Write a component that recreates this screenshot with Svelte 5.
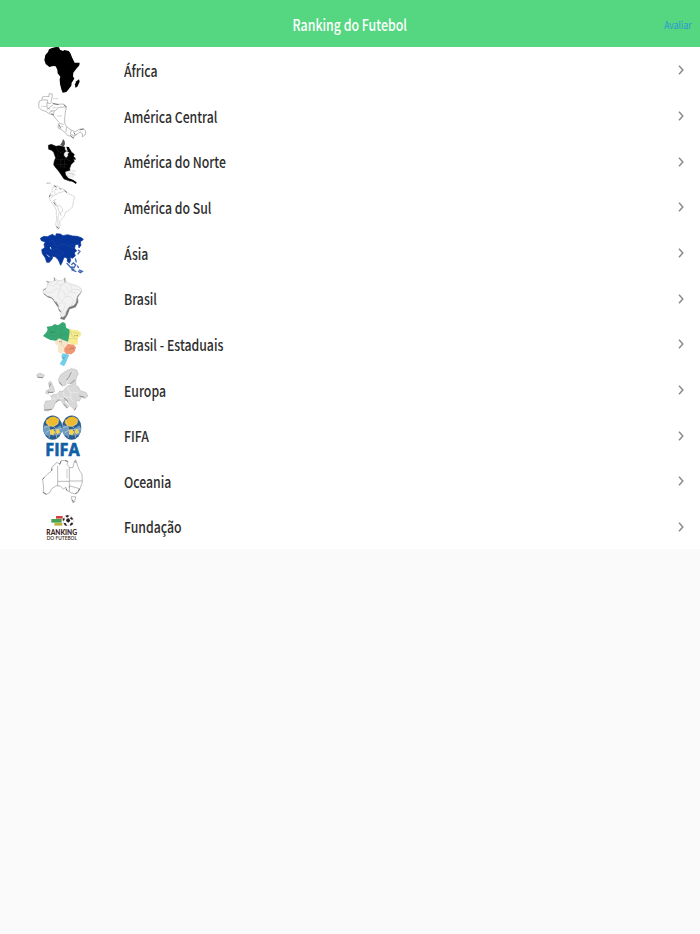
<script>
  // `top` is where each drawing's row starts on its own 192-wide canvas
  const regions = [
    { id: "africa", name: "África", top: 22 },
    { id: "central", name: "América Central", top: 3 },
    { id: "north", name: "América do Norte", top: 8 },
    { id: "south", name: "América do Sul", top: 13 },
    { id: "asia", name: "Ásia", top: 6 },
    { id: "brazil", name: "Brasil", top: 5 },
    { id: "states", name: "Brasil - Estaduais", top: 9 },
    { id: "europe", name: "Europa", top: 8 },
    { id: "fifa", name: "FIFA", top: 7 },
    { id: "oceania", name: "Oceania", top: 6 },
    { id: "foundation", name: "Fundação", top: 143 },
  ];
</script>

<header>
  <h1><span>Ranking do Futebol</span></h1>
  <button class="rate"><span>Avaliar</span></button>
</header>

<ul>
  {#each regions as region (region.id)}
    <li>
      <svg class="thumb" viewBox="0 {region.top} 192 137" aria-hidden="true">
        {#if region.id === "africa"}
          <path d="M57 29L66 25L78 22L87 23L90 30L99 34L103 31L116 34L121 40L126 53L134 69L149 69L148 77L138 89L130 99L129 110L133 117L125 129L124 138L116 149L109 157L98 159L94 149L90 133L89 119L91 111L83 101L82 90L77 80L69 79L58 82L47 73L43 61L46 46L54 37Z" />
          <path d="M147 119L149 126L142 141L136 144L135 134L139 125Z" />
        {:else if region.id === "central"}
          <g class="outline">
            <path d="M37 15L46 13L57 14L57 5L67 6L66 16L63 29L68 34L83 37L101 36L109 44L106 61L104 79L104 94L110 104L123 114L136 119L148 112L160 110L167 117L166 128L157 135L158 126L150 120L142 126L134 130L130 139L122 133L112 130L107 123L94 113L84 108L85 98L88 92L76 79L69 69L57 65L49 59L34 54L26 45L27 28L36 24Z" />
            <path d="M37 24H53V34H63M50 54L60 45L69 39M58 62L67 57L76 56L87 46L108 45M68 67L74 58M89 95L101 97M109 105L108 120" />
            <path d="M51 31V48L60 51M124 115L121 126L132 132" />
          </g>
          <path class="ink" d="M64 65L72 69M69 35L86 38M101 38L109 45M149 114L161 111M131 121L137 130M87 98L92 109M121 130L131 139" />
          <path class="labels" d="M69 20H84M34 43H51M68 47H82M82 72H96M59 57H70M92 104H101M132 128H142" />
        {:else if region.id === "north"}
          <path stroke="#000" stroke-width="1.5" d="M55 27L64 24L78 30L88 28L96 30L104 32L105 42L112 45L120 39L124 47L133 54L129 66L133 75L123 85L119 96L120 103L105 106L107 116L115 126L125 130L121 135L102 128L92 113L85 103L76 93L71 85L73 73L77 65L71 48L65 42L56 39Z" />
          <path class="relief" d="M79 34L85 46L93 49L101 44M77 68L91 70L108 68L123 75M79 83L94 85L112 84M93 70L92 91L109 93M84 51L83 65M104 72L103 91M111 52L108 67" />
          <path class="water" d="M103 50L109 45L117 48L113 53L114 58L108 64L102 57ZM108 107L118 103L128 109L137 116L128 122L113 120Z" />
          <path fill="#555" d="M99 8L104 14L105 24L100 31L91 25L96 18Z" />
          <path d="M109 31L117 32L121 42L117 48L112 42ZM127 60L136 64L137 71L128 68ZM119 127L130 131L140 138L138 143L129 137L119 133Z" />
          <path class="labels" d="M118 111L132 114M49 141H61M127 103L137 105" />
        {:else if region.id === "south"}
          <g class="faint">
            <path d="M72 18L83 19L88 25L99 28L108 33L113 41L127 47L134 52L130 65L128 82L118 92L107 97L103 109L94 119L89 125L90 137L87 148L80 145L77 134L80 119L79 105L79 91L73 79L63 67L57 53L61 42L66 35L67 27Z" />
            <path d="M72 18L78 28L72 35L77 45L66 51L64 56M78 45L87 39L97 37L104 31M79 59L70 63L77 69L80 79L89 78L96 84L98 95L91 99L93 109M82 79L88 97L84 113L84 138L87 147" />
          </g>
          <path class="ink" d="M73 18L80 23M88 25L93 30M61 45L58 52M71 67L77 77M80 140L85 147M103 33L111 39" />
          <path class="labels" d="M51 10H62M61 47H68M77 30H82" />
        {:else if region.id === "asia"}
          <path fill="#06359b" stroke="#06359b" stroke-width="2" stroke-linejoin="round" d="M31 31L41 25L52 26L67 19L76 25L79 17L91 18L99 23L113 20L128 24L142 25L156 30L160 35L151 41L153 52L147 60L145 49L136 50L134 61L140 69L133 74L136 84L127 91L120 88L122 98L118 106L111 99L113 93L105 87L101 91L97 102L92 112L85 96L77 87L68 85L67 92L58 103L50 103L46 90L37 77L35 65L44 59L42 49L46 42L34 38Z" />
          <path fill="none" stroke="#1f4dac" stroke-width="1.3" d="M57 41L69 36L75 50L87 54L98 49L114 53L130 49M69 66L81 60L91 72L104 74M43 70L57 69L65 80M77 76L88 84L101 77M114 54L124 60L134 58" />
          <path fill="none" stroke="#dce7f9" stroke-width="3" d="M61 57L63 64M51 80L59 88" />
          <path class="island" d="M144 66L150 70L143 79M110 105L123 119L133 127M124 110L130 105L137 111L132 119L124 116M142 113L146 120M147 126L157 130L151 134L144 129M124 125L139 131M136 91L139 103" />
        {:else if region.id === "brazil"}
          <path fill="#7b7b7b" d="M38 57L52 68L66 73L83 98L87 109L98 120L90 133L103 137L113 121L119 105L137 99L145 83L144 69L156 51L145 48L132 68L109 97L96 119L83 91L61 63Z" />
          <path fill="#f2f2f2" stroke="#c5c5c5" stroke-width="1.5" d="M38 53L40 46L50 41L53 27L50 20L64 23L75 18L73 10L84 20L98 17L105 10L108 23L123 29L145 36L154 43L153 53L142 66L141 80L132 93L117 98L109 111L106 123L98 129L90 123L96 113L85 101L84 88L70 77L62 69L53 66Z" />
          <path fill="none" stroke="#dcdcdc" stroke-width="1.8" d="M52 29L68 36L79 28L83 19M43 51L58 56L68 52L79 42L91 47L94 28M80 29L91 34L110 24M91 46L81 67L96 81L107 66L99 47M108 37L118 51L139 57M105 66L120 67L131 78L121 97M87 88L98 84L107 92L97 112M96 119L108 115M122 33L124 49L110 62M126 45L151 46" />
          <path class="shade" d="M50 21L58 25M40 47L48 43M72 10L75 20M104 11L105 24M53 67L65 70L72 77M78 82L86 97M142 70L139 83" />
        {:else if region.id === "states"}
          <path fill="#f7e6ca" d="M76 63L91 60L112 67L119 78L106 86L105 99L93 108L83 100L85 85L76 77Z" />
          <path fill="#f7ec91" d="M117 32L127 35L142 36L152 43L154 51L144 61L143 80L130 80L116 74L112 61L118 49Z" />
          <path fill="#36a873" d="M39 54L49 43L53 35L50 26L66 24L74 18L84 22L98 12L106 16L109 30L118 34L119 43L116 62L114 71L99 66L87 61L78 68L61 66L49 60Z" />
          <path fill="#f19672" d="M103 91L114 78L131 80L138 88L134 101L124 109L110 109L103 102Z" />
          <path fill="#72cee9" d="M98 106L108 107L118 112L113 121L108 134L102 145L89 138L98 123L94 114Z" />
          <path class="boundary" d="M55 31L66 42L77 36L79 22M63 40L61 53L75 56L84 48L89 59L96 43L93 25M84 48L98 52L110 47M123 37L124 51L134 58M118 63L130 60L142 64M128 43L149 47M94 65V79L103 87M107 96L123 94M105 112L102 127" />
          <path class="labels state-label" d="M63 43H76M87 71H96M121 91H132M133 53H144M95 120H103" />
        {:else if region.id === "europe"}
          <g transform="translate(0 -1) scale(1 1.04)">
            <path fill="#d9d9d9" stroke="#b4b4b4" stroke-width="1.5" stroke-linejoin="round" d="M20 31L30 26L43 32L40 39L23 39ZM55 54L62 50L70 65L74 80L61 83L52 77L60 70ZM49 77L57 78L55 87L47 84ZM85 45L92 31L105 22L124 13L140 17L145 28L138 42L137 62L145 66L151 77L168 82L174 92L166 99L154 96L149 106L137 107L142 121L134 133L125 124L117 117L109 105L102 105L107 114L117 122L111 128L101 118L94 106L85 105L76 112L70 128L54 136L43 134L42 121L47 107L62 106L67 99L61 92L71 88L82 87L89 78L99 79L105 71L114 63L124 62L133 47L129 47L122 58L113 55L107 61L96 64L88 55Z" />
            <path fill="none" stroke="#efefef" stroke-width="2" d="M64 104L72 99L79 105M82 88L84 99L97 100M100 81L103 95L119 96M113 67L120 82L145 82M120 97L130 109M122 81L123 98M109 61L112 49L127 25" />
            <path class="shade" d="M88 52L96 61M109 47L117 38L124 24M23 38L39 40M54 82L70 82M62 56L58 66M43 133L66 131M77 111L88 102M102 98L114 108M102 116L112 127M121 57L134 47M148 92L163 96M138 126L133 134" />
          </g>
        {:else if region.id === "fifa"}
          {#each [68, 125] as x}
            <g transform="translate({x} 54) scale(1 1.25)">
              <circle r="29" fill="#285d92" />
              <path fill="#edb92e" d="M-19 -18L-8 -25L5 -27L18 -21L16 -9L3 -3L-12 -4L-21 -11Z" />
              <path fill="#6d9cc6" d="M-26 -6L-13 -4L-6 9L-12 21L-23 17L-29 5ZM10 1L24 -6L29 5L24 16L11 20L5 9Z" />
              <path fill="#f2d154" d="M-8 6L2 4L8 11L2 18L-8 15ZM13 3L20 5L22 12L14 16L9 10Z" />
              <path fill="none" stroke="#e9e2b1" stroke-width="1.5" d="M-18 -19L-12 -5L-27 1M-12 -4L3 -3L16 -10L19 -20M3 -3L11 5L27 2M-12 -4L-8 6L-21 12M-7 14L-11 25M8 14L13 25M-8 6L2 4L11 5M-8 15L2 18L9 13" />
            </g>
          {/each}
          <text class="fifa-text" x="46" y="140" textLength="103" lengthAdjust="spacingAndGlyphs">FIFA</text>
        {:else if region.id === "oceania"}
          <g transform="translate(0 -2) scale(1 1.1)">
            <path class="outline" d="M38 64L43 60L53 51L64 43L66 31L74 26L80 19L89 24L94 14L104 14L114 16L111 25L120 34L129 33L132 20L137 12L143 29L149 42L156 51L157 73L151 89L143 102L134 105L121 101L110 95L108 87L100 92L92 84L79 83L65 91L60 101L48 107L39 101L41 92Z" />
            <path class="outline" d="M83 29V71H118V89M118 32V70H157M118 83L137 88L149 91M83 71V84M118 84V99M124 113L137 113L134 126L129 130L126 123Z" />
            <path class="ink" d="M66 36L65 42M93 16L89 25M105 14L113 17M133 17L139 19M43 61L38 65M108 91L111 96M39 101L49 106M142 101L136 105M126 122L133 127M149 91L144 99" />
            <path class="state-line" d="M111 37V62" />
          </g>
        {:else}
          <path fill="#47a14c" d="M64 188H95V199H64Z" />
          <path fill="#c2ae3b" d="M73 200H97V208H73Z" />
          <path fill="#d53f3f" d="M78 179H98V187H78Z" />
          <circle cx="115" cy="192" r="16" fill="#fff" stroke="#aaa" />
          <path fill="#2a2020" d="M110 187L117 186L121 193L115 199L108 194ZM106 178L114 176L117 180L111 184ZM123 181L129 187L127 191L120 187ZM126 198L130 203L121 209L120 203ZM101 199L108 201L111 209L104 207ZM98 188L103 184L104 191L99 194Z" />
          <text class="brand" x="49" y="237" textLength="92" lengthAdjust="spacingAndGlyphs">RANKING</text>
          <text class="brand-small" x="50" y="252" textLength="91" lengthAdjust="spacingAndGlyphs">DO FUTEBOL</text>
        {/if}
      </svg>
      <span class="name">{region.name}</span>
      <svg class="chevron" viewBox="0 0 8 12" aria-hidden="true">
        <path d="M2 1.8L5.8 6L2 10.2" />
      </svg>
    </li>
  {/each}
</ul>

<style>
  :global(body) {
    background: #fafafa;
    font-family: "Noto Sans CJK SC", "Noto Sans", sans-serif;
  }

  header {
    display: grid;
    grid-template-columns: 1fr auto 1fr;
    align-items: center;
    height: 47.3px;
    box-sizing: border-box;
    padding: 1px 8px 0;
    background: #55d782;
  }

  h1 {
    grid-column: 2;
    margin: 0;
    font-size: 15.5px;
    font-weight: 500;
    line-height: 20px;
    color: #fff;
  }

  h1 span,
  .rate span {
    display: block;
    transform: scaleX(0.797);
  }

  .rate {
    justify-self: end;
    padding: 2px 0 0;
    border: none;
    background: none;
    font: inherit;
    font-size: 10px;
    line-height: 16px;
    color: #2e96cf;
    cursor: pointer;
  }

  .rate span {
    transform: scaleX(0.87);
    transform-origin: right;
  }

  ul {
    margin: 0;
    padding: 0;
    list-style: none;
    background: #fff;
  }

  li {
    display: flex;
    align-items: center;
    height: 45.65px;
    padding: 0 15px 0 30px;
  }

  .thumb {
    width: 64px;
    height: 45.65px;
    margin-right: 30px;
    overflow: visible;
  }

  .name {
    flex: 1;
    padding-top: 1.8px;
    font-size: 15px;
    font-weight: 500;
    line-height: 20px;
    color: #2e2e2e;
    transform: scaleX(0.818);
    transform-origin: left;
  }

  .chevron {
    width: 8px;
    height: 12px;
    margin-top: 0.6px;
    fill: none;
    stroke: #8b8b8b;
    stroke-width: 1.5;
  }

  .outline {
    fill: none;
    stroke: #929292;
    stroke-width: 1.8;
  }

  .faint {
    fill: none;
    stroke: #b4b4b4;
    stroke-width: 1.8;
    stroke-dasharray: 5 1;
  }

  .ink {
    fill: none;
    stroke: #666;
    stroke-width: 2.5;
  }

  .labels {
    fill: none;
    stroke: #bbb;
    stroke-width: 2.5;
    stroke-dasharray: 3 1;
  }

  .relief {
    fill: none;
    stroke: #3b3b3b;
    stroke-width: 1.6;
    stroke-dasharray: 4 2;
  }

  .water {
    fill: #f2f2f2;
    stroke: #ccc;
  }

  .island {
    fill: none;
    stroke: #4068b1;
    stroke-width: 4;
  }

  .shade {
    fill: none;
    stroke: #858585;
    stroke-width: 2.5;
  }

  .boundary {
    fill: none;
    stroke: #566b40;
    stroke-opacity: 0.3;
    stroke-width: 1.5;
  }

  .state-label {
    stroke: #50543e;
    stroke-opacity: 0.6;
  }

  .state-line {
    fill: none;
    stroke: #999;
    stroke-width: 1.5;
  }

  .fifa-text {
    fill: #105fa5;
    stroke: #105fa5;
    stroke-width: 2;
    font-family: "Open Sans", sans-serif;
    font-size: 53px;
    font-weight: 700;
  }

  .brand,
  .brand-small {
    fill: #382522;
    font-family: Lato, sans-serif;
    font-size: 21px;
    font-weight: 900;
  }

  .brand-small {
    font-size: 15px;
    font-weight: 600;
  }
</style>
